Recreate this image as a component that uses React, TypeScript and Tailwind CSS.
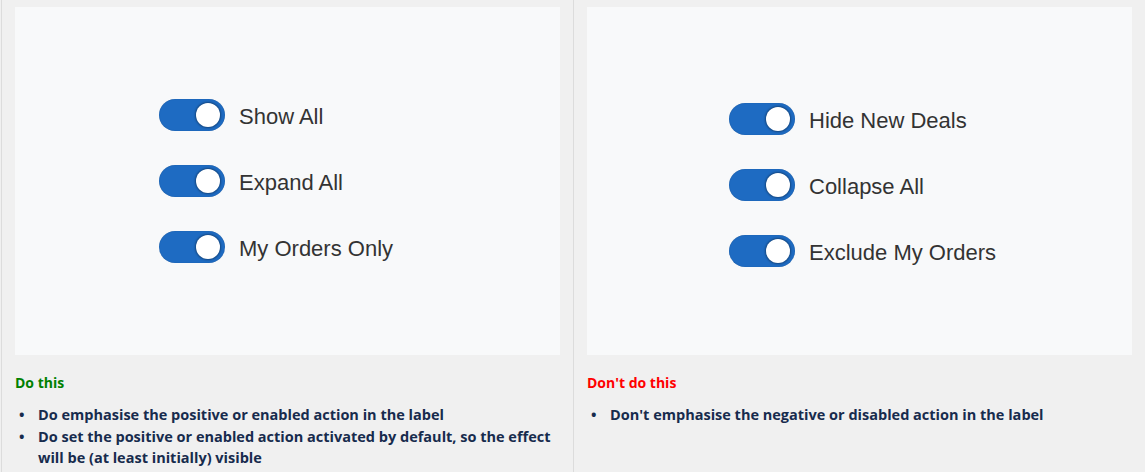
import React from "react";

const Toggle = () => (
  <div className="relative h-[32px] w-[66px] rounded-full bg-[#1e6bc2] shadow-[inset_0_0_1px_rgba(0,0,0,0.3)]">
    <div className="absolute right-[5px] top-[4px] h-[24px] w-[24px] rounded-full bg-white shadow-[0_0_2px_1px_rgba(0,0,0,0.35)]" />
  </div>
);

const Row = ({ label }: { label: string }) => (
  <div className="flex items-center gap-[14px]">
    <Toggle />
    <span className="mt-[3px] text-[22px] leading-none text-[#333]" style={{ fontFamily: '"Liberation Sans", Arial, sans-serif' }}>
      {label}
    </span>
  </div>
);

const Panel = ({ labels, offset }: { labels: string[]; offset: string }) => (
  <div className="h-[348px] w-[545px] bg-[#f8f9fa]">
    <div className={`flex flex-col gap-[34px] ${offset}`}>
      {labels.map((l) => (
        <Row key={l} label={l} />
      ))}
    </div>
  </div>
);

export default function App() {
  const font = { fontFamily: '"Open Sans", "Noto Sans", sans-serif' };
  return (
    <div className="flex h-[472px] w-[1145px] bg-[#f0f0f0]" style={font}>
      <div className="ml-[1px] w-[573px] border-l border-r border-[#dcdcdc] px-[13px] pt-[7px]">
        <Panel labels={["Show All", "Expand All", "My Orders Only"]} offset="pl-[144px] pt-[92px]" />
        <div className="mt-[17px] text-[14px] font-bold text-[#008000]">Do this</div>
        <ul className="mt-[11px] text-[14.5px] font-bold leading-[21.5px] text-[#172b4d]">
          <li className="flex">
            <span className="w-[23px] pl-[4px]">•</span>
            <span>Do emphasise the positive or enabled action in the label</span>
          </li>
          <li className="flex">
            <span className="w-[23px] shrink-0 pl-[4px]">•</span>
            <span>Do set the positive or enabled action activated by default, so the effect will be (at least initially) visible</span>
          </li>
        </ul>
      </div>
      <div className="w-[571px] px-[13px] pt-[7px]">
        <Panel labels={["Hide New Deals", "Collapse All", "Exclude My Orders"]} offset="pl-[142px] pt-[96px]" />
        <div className="mt-[17px] text-[14px] font-bold text-[#ff0000]">Don't do this</div>
        <ul className="mt-[11px] text-[14.5px] font-bold leading-[21.5px] text-[#172b4d]">
          <li className="flex">
            <span className="w-[23px] pl-[4px]">•</span>
            <span>Don't emphasise the negative or disabled action in the label</span>
          </li>
        </ul>
      </div>
    </div>
  );
}
